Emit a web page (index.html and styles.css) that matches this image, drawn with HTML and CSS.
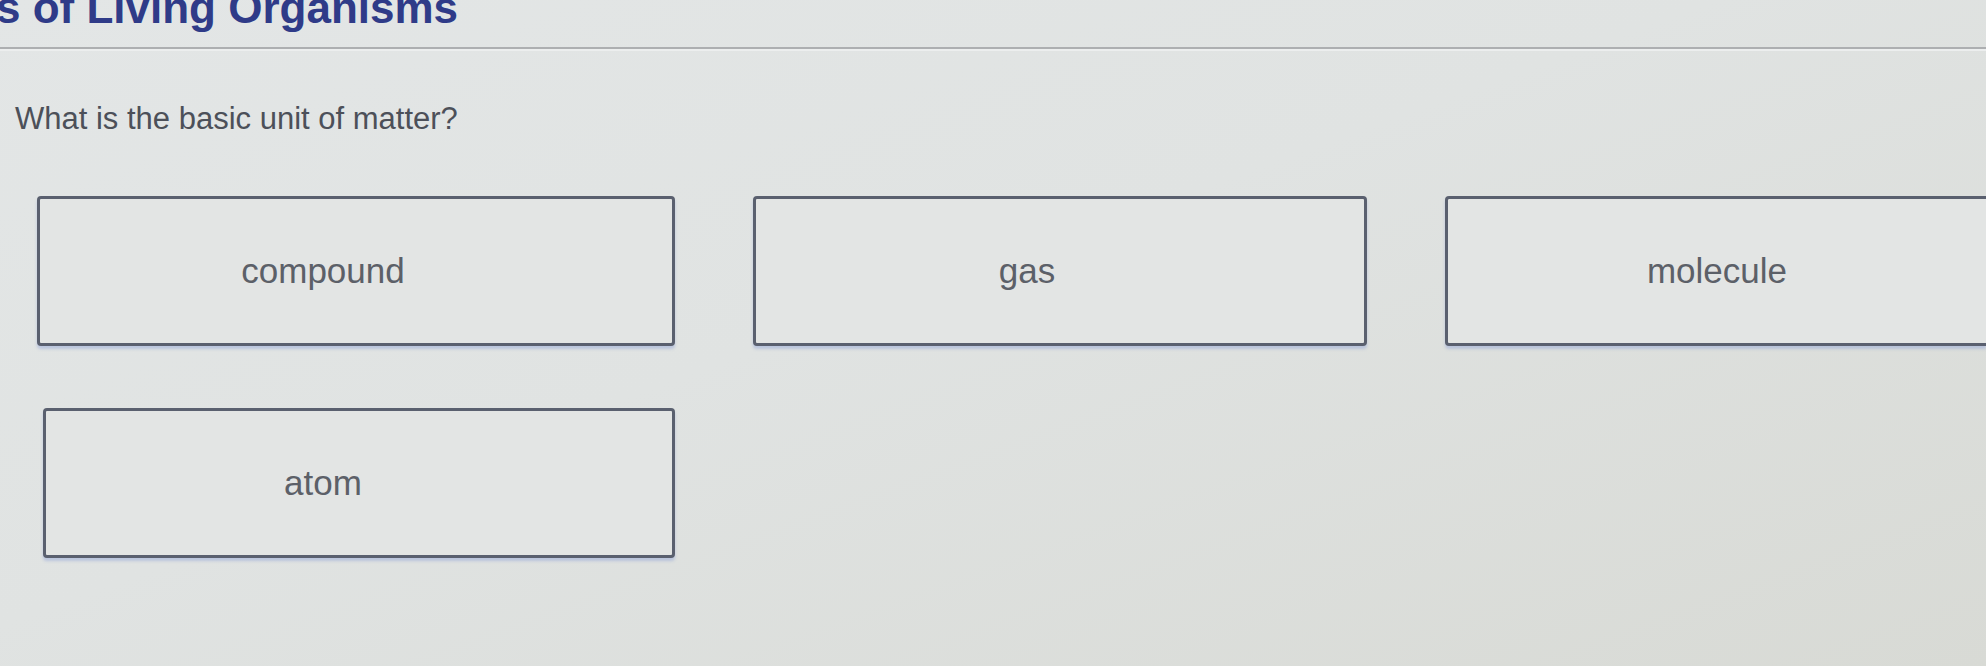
FILE: index.html
```html
<!DOCTYPE html>
<html lang="en">
<head>
<meta charset="utf-8">
<title>Quiz</title>
<link rel="stylesheet" href="styles.css">
</head>
<body>
<header class="topbar">
  <h1 class="title">s of Living Organisms</h1>
</header>
<main class="quiz">
  <p class="question">What is the basic unit of matter?</p>
  <div class="options">
    <button class="option">compound</button>
    <button class="option">gas</button>
    <button class="option option-edge">molecule</button>
    <button class="option option-shift">atom</button>
  </div>
</main>
</body>
</html>
```
FILE: styles.css
```css
html, body {
  margin: 0;
  padding: 0;
}
body {
  width: 1986px;
  height: 666px;
  overflow: hidden;
  font-family: "Liberation Sans", Arial, sans-serif;
  background: linear-gradient(160deg, #e3e6e6 0%, #e0e3e2 45%, #d8dad5 100%);
}
.topbar {
  height: 47px;
  overflow: hidden;
  border-bottom: 2px solid #adafb1;
  box-shadow: 0 2px 0 #eceeee;
}
.title {
  margin: -14px 0 0 -4px;
  font-size: 44px;
  line-height: 44px;
  font-weight: bold;
  color: #2f3b88;
  white-space: nowrap;
}
.quiz {
  padding-left: 15px;
}
.question {
  margin: 51px 0 0 0;
  font-size: 31px;
  line-height: 37px;
  color: #4c5059;
}
.options {
  display: grid;
  grid-template-columns: 638px 614px 541px;
  grid-auto-rows: 150px;
  column-gap: 78px;
  row-gap: 62px;
  margin: 59px 0 0 22px;
}
.option {
  display: flex;
  align-items: center;
  justify-content: center;
  padding: 0 66px 0 0;
  margin: 0;
  border: 3px solid #5a606f;
  border-radius: 4px;
  background: #e3e5e4;
  box-shadow: 0 3px 3px rgba(140, 160, 215, 0.45);
  font-family: "Liberation Sans", Arial, sans-serif;
  font-size: 35px;
  color: #5c6068;
}
.option-edge {
  padding-right: 0;
  border-right: none;
  border-top-right-radius: 0;
  border-bottom-right-radius: 0;
}
.option-shift {
  margin-left: 6px;
  padding-right: 72px;
}
```
